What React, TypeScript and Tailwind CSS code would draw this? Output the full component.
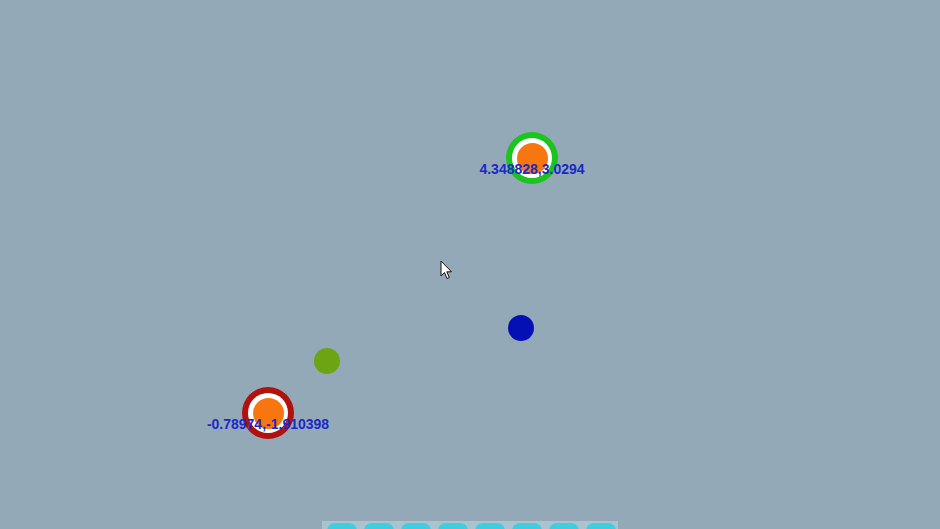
import React from "react";

interface Target {
  x: number;
  y: number;
  ring: string;
  label: string;
}

// markers on the free canvas: their place is the content
function RingTarget({ x, y, ring, label }: Target) {
  return (
    <div
      className="absolute w-[200px] flex flex-col items-center"
      style={{ left: x - 100, top: y - 26 }}
    >
      <div
        className={`w-[52px] h-[52px] rounded-full ${ring} flex items-center justify-center`}
      >
        <div className="w-[40px] h-[40px] rounded-full bg-white flex items-center justify-center">
          <div className="w-[31px] h-[31px] rounded-full bg-[#f7760f]" />
        </div>
      </div>
      <div className="-mt-[23px] w-full text-center text-[14px] leading-[16px] font-bold text-[#1a29c9] font-['Liberation_Sans',Arial,sans-serif]">
        {label}
      </div>
    </div>
  );
}

export default function App() {
  return (
    <div className="relative w-[940px] h-[529px] overflow-hidden bg-[#94a9b8] flex flex-col justify-end items-center">
      <RingTarget x={532} y={158} ring="bg-[#1cc41f]" label="4.348828,3.0294" />
      <RingTarget x={268} y={413} ring="bg-[#b0120d]" label="-0.78974,-1.910398" />

      {/* blue dot */}
      <div className="absolute left-[508px] top-[315px] w-[26px] h-[26px] rounded-full bg-[#0410b5]" />
      {/* green dot */}
      <div className="absolute left-[314px] top-[348px] w-[26px] h-[26px] rounded-full bg-[#6ca414]" />

      {/* cursor */}
      <svg
        className="absolute left-[440px] top-[260px]"
        width="14"
        height="20"
        viewBox="0 0 14 20"
      >
        <path
          d="M1 1 L1 16 L4.5 12.5 L7 18.5 L9.3 17.5 L6.8 11.8 L11.5 11.8 Z"
          fill="#ffffff"
          stroke="#111111"
          strokeWidth="1"
          strokeLinejoin="round"
        />
      </svg>

      {/* bottom toolbar, mostly below the window edge */}
      <div className="w-[296px] h-[8px] overflow-hidden bg-[#a9c3d0] flex gap-[7px] px-[5px] pt-[2px]">
        {Array.from({ length: 8 }).map((_, i) => (
          <div key={i} className="w-[30px] h-[16px] shrink-0 rounded-t-[8px] bg-[#3fcde0]" />
        ))}
      </div>
    </div>
  );
}
